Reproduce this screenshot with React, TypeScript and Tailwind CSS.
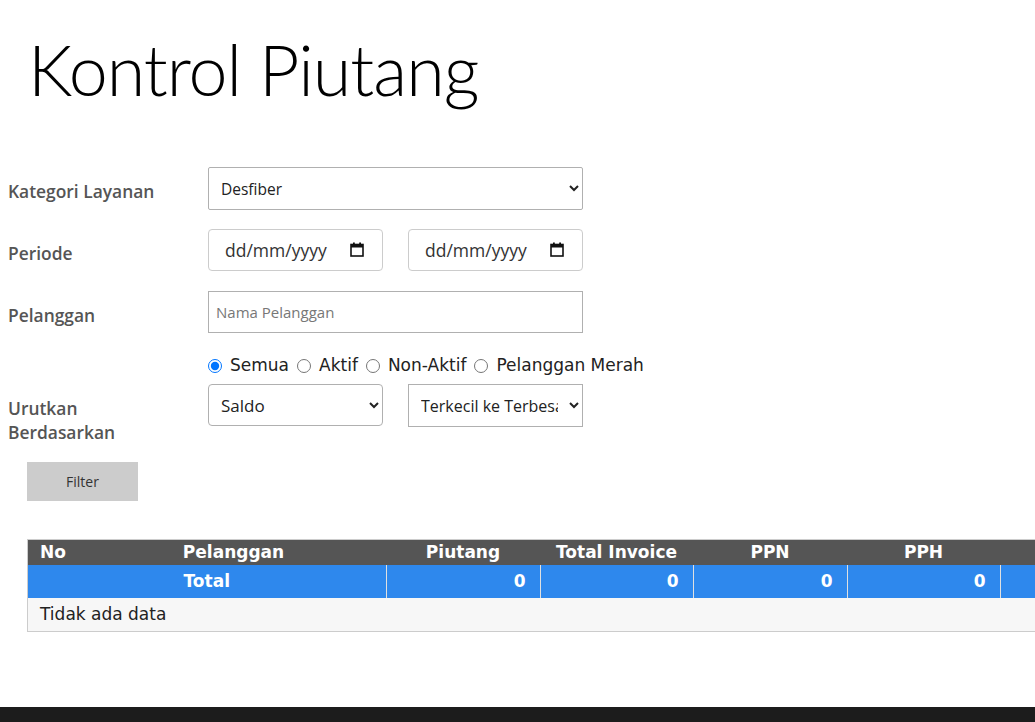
import { useState } from "react";

const labelCls =
  "w-[200px] shrink-0 pt-[12px] text-[17.4px] leading-[24px] font-semibold text-[#555]";
const fieldFont = { fontFamily: '"Open Sans", "Segoe UI", sans-serif' };

function DateBox() {
  return (
    <div className="w-[175px] h-[42px] border border-[#ccc] rounded-[4px] pl-[16px] pr-[18px] flex items-center justify-between text-[17.5px] text-[#333]">
      <span>dd/mm/yyyy</span>
      <svg width="14" height="15" viewBox="0 0 14 15" className="mt-[-2px]">
        <rect x="1" y="2.5" width="12" height="11.5" fill="none" stroke="#111" strokeWidth="1.6" />
        <rect x="1" y="2.5" width="12" height="3" fill="#111" />
        <rect x="3" y="0.5" width="1.8" height="3" fill="#111" />
        <rect x="9.2" y="0.5" width="1.8" height="3" fill="#111" />
      </svg>
    </div>
  );
}

export default function App() {
  const [status, setStatus] = useState("semua");
  const statuses = [
    { id: "semua", label: "Semua" },
    { id: "aktif", label: "Aktif" },
    { id: "nonaktif", label: "Non-Aktif" },
    { id: "merah", label: "Pelanggan Merah" },
  ];

  return (
    <div className="min-h-[722px] w-[1035px] overflow-hidden bg-white flex flex-col">
      <div className="flex-1">
        <h1
          className="pl-[28px] pt-[19px] h-[140px] text-[70px] leading-[100px] tracking-[-1px] font-light text-black"
          style={{ fontFamily: 'Lato, "Segoe UI", sans-serif' }}
        >
          Kontrol Piutang
        </h1>

        <div className="pl-[8px] pt-[27px] flex flex-col" style={fieldFont}>
          <div className="flex h-[42px]">
            <div className={labelCls}>Kategori Layanan</div>
            <select className="w-[375px] h-[43px] border border-[#b0b0b0] rounded-[2px] px-[8px] text-[15.5px] text-[#222] bg-white">
              <option>Desfiber</option>
            </select>
          </div>

          <div className="flex h-[42px] mt-[20px]">
            <div className={labelCls}>Periode</div>
            <div className="flex gap-[25px]">
              <DateBox />
              <DateBox />
            </div>
          </div>

          <div className="flex h-[42px] mt-[20px]">
            <div className={labelCls}>Pelanggan</div>
            <input
              type="text"
              placeholder="Nama Pelanggan"
              className="w-[375px] h-[42px] border border-[#b0b0b0] px-[7px] text-[15px] text-[#222] placeholder:text-[#777]"
            />
          </div>

          <div
            className="flex items-center gap-[8px] ml-[200px] mt-[21px] h-[24px] text-[17px] text-[#222]"
            style={{ fontFamily: '"DejaVu Sans", Verdana, sans-serif' }}
          >
            {statuses.map((s) => (
              <label key={s.id} className="flex items-center gap-[8px]">
                <input
                  type="radio"
                  name="status"
                  checked={status === s.id}
                  onChange={() => setStatus(s.id)}
                  className="w-[14px] h-[14px] m-0 accent-[#0075ff]"
                />
                <span>{s.label}</span>
              </label>
            ))}
          </div>

          <div className="flex mt-[6px]">
            <div className={labelCls}>
              Urutkan
              <br />
              Berdasarkan
            </div>
            <div className="flex gap-[25px] h-[42px]">
              <select className="w-[175px] h-[42px] border border-[#b0b0b0] rounded-[4px] px-[8px] text-[17px] text-[#222] bg-white">
                <option>Saldo</option>
              </select>
              <select className="w-[175px] h-[43px] border border-[#b0b0b0] px-[8px] text-[16px] text-[#222] bg-white">
                <option>Terkecil ke Terbesar</option>
              </select>
            </div>
          </div>

          <button className="ml-[19px] mt-[18px] w-[111px] h-[39px] bg-[#ccc] text-[14px] text-[#333]">
            Filter
          </button>
        </div>

        <div
          className="ml-[27px] mt-[38px] w-[1100px] border border-[#ccc] border-r-0"
          style={{ fontFamily: '"DejaVu Sans", Verdana, sans-serif' }}
        >
          <table className="w-full border-collapse table-fixed text-[17px]">
            <colgroup>
              <col className="w-[53px]" />
              <col className="w-[305px]" />
              <col className="w-[154px]" />
              <col className="w-[153px]" />
              <col className="w-[154px]" />
              <col className="w-[153px]" />
              <col className="w-[128px]" />
            </colgroup>
            <thead>
              <tr className="bg-[#555] text-white h-[25px] leading-[25px] font-bold">
                <th className="text-left pl-[12px]">No</th>
                <th className="text-center">Pelanggan</th>
                <th className="text-center">Piutang</th>
                <th className="text-center">Total Invoice</th>
                <th className="text-center">PPN</th>
                <th className="text-center">PPH</th>
                <th></th>
              </tr>
            </thead>
            <tbody>
              <tr className="bg-[#2e88ed] text-white font-bold h-[33px]">
                <td colSpan={2} className="text-center border-r border-[#e0e0e0]">
                  Total
                </td>
                {[0, 1, 2, 3].map((i) => (
                  <td key={i} className="text-right pr-[14px] border-r border-[#e0e0e0]">
                    0
                  </td>
                ))}
                <td></td>
              </tr>
              <tr className="bg-[#f7f7f7] h-[33px] text-[#222]">
                <td colSpan={7} className="pl-[12px]">
                  Tidak ada data
                </td>
              </tr>
            </tbody>
          </table>
        </div>
      </div>
      <div className="h-[15px] bg-[#1c1c1c]" />
    </div>
  );
}
